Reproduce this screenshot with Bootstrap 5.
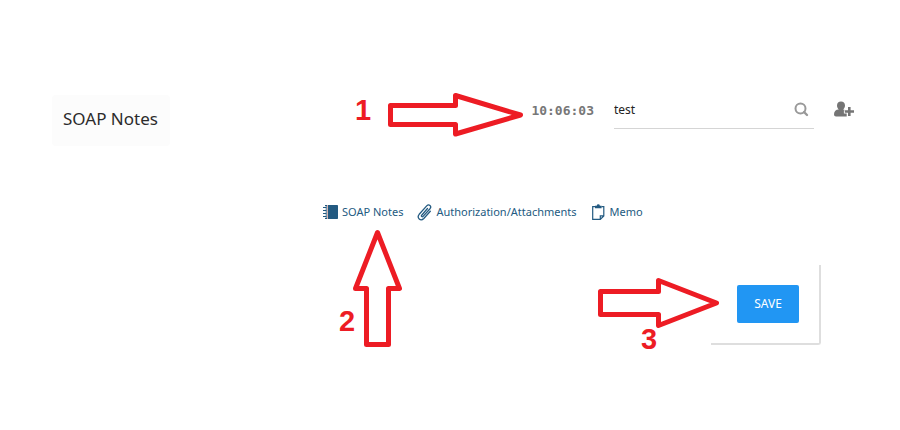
<!DOCTYPE html>
<html lang="en">
<head>
<meta charset="utf-8">
<meta name="viewport" content="width=device-width, initial-scale=1">
<title>SOAP Notes</title>
<link href="https://cdn.jsdelivr.net/npm/bootstrap@5.3.0/dist/css/bootstrap.min.css" rel="stylesheet">
<style>
body { font-family: "Noto Sans", "Open Sans", sans-serif; background: #fff; }
.page-top { padding: 95px 46px 0 52px; }
.page-title { background: #fcfcfc; color: #2b2b2b; font-size: 17px; line-height: 24px; padding: 12px 12px 15px 11px; }
.clock { font: bold 13px/20px "DejaVu Sans Mono", monospace; color: #777; margin-top: 6px; }
.patient-search { width: 200px; border-bottom: 1px solid #d5d5d5; height: 34px; }
.patient-search input { font-size: 12px; line-height: 18px; color: #222; padding: 6px 0 10px; box-shadow: none; }
.patient-search button { color: #999; padding: 0 5px 4px; line-height: 1; }
.add-user { color: #757575; line-height: 1; margin-top: 6px; }
.note-tabs { gap: 14px; padding: 56px 0 0 323px; }
.note-tabs a { color: #235a81; font-size: 11px; line-height: 20px; gap: 4px; }
.actions { padding: 43px 79px 0 0; }
.save-panel { border-right: 2px solid #dedede; border-bottom: 2px solid #dedede; border-bottom-right-radius: 3px; padding: 20px 20px 20px 26px; }
.btn-save { --bs-btn-color: #fff; --bs-btn-bg: #2196f3; --bs-btn-hover-color: #fff; --bs-btn-hover-bg: #1b87dc; font-size: 12px; line-height: 18px; padding: 10px 0; width: 62px; border: 0; border-radius: 2px; }
.callouts { pointer-events: none; }
.callouts polygon { fill: none; stroke: #ed1c24; stroke-width: 5; stroke-linejoin: round; }
.callouts text { fill: #ed1c24; font: bold 29px "Liberation Sans", Arial, sans-serif; }
</style>
</head>
<body class="position-relative min-vh-100">
<header class="page-top d-flex align-items-start">
  <h1 class="page-title m-0 fw-normal rounded-1">SOAP Notes</h1>
  <time class="clock ms-auto me-1">10:06:03</time>
  <form class="patient-search d-flex align-items-center ms-3 me-3">
    <input class="form-control border-0 rounded-0 bg-transparent" type="text" value="test" aria-label="Search patient">
    <button class="btn border-0" type="button" aria-label="Search">
      <svg class="d-block" width="15" height="15" viewBox="0 0 15 15" fill="none" stroke="currentColor" stroke-width="2"><circle cx="6.5" cy="6.5" r="5"/><path d="M10 10l3 3" stroke-width="2.4" stroke-linecap="round"/></svg>
    </button>
  </form>
  <button class="add-user btn border-0 p-0 ms-1" type="button" aria-label="Add patient">
    <svg class="d-block" width="20" height="16" viewBox="0 0 20 16" fill="currentColor"><path d="M7 .5C4.600.500 3 2 3 4.500c0 1.800.8 3.200 1.800 3.900C2.200 8.300 0 9.800 0 13.300 0 14.900.9 15.500 2 15.500h10.700V12.600H9.900V9.200h1.200c-.6-.5-1.300-.7-2-.8C10.200 7.700 11 6.300 11 4.500 11 2 9.400.5 7 .5z"/><path d="M14 6h2.600v3.200H20v2.600h-3.400V15H14v-3.200h-3.200V9.200H14z"/></svg>
  </button>
</header>
<nav class="note-tabs d-flex" aria-label="Note sections">
  <a class="d-flex align-items-center text-decoration-none" href="#notes">
    <svg width="15" height="16" viewBox="0 0 15 16"><path fill="#235a81" d="M2 1h12.300q.7 0 .7.700v12.600q0 .7-.7.700H2z"/><path d="M4.500 1v14" stroke="#d8b5b0"/><path d="M0 3.500h3.500M0 6.500h3.500M0 9.500h3.500M0 12.500h3.500" stroke="#fff" stroke-width="2.400"/><path d="M0 3.500h3.500M0 6.500h3.500M0 9.500h3.500M0 12.500h3.500" stroke="#235a81" stroke-width="1.200"/></svg>
    <span>SOAP Notes</span>
  </a>
  <a class="d-flex align-items-center text-decoration-none" href="#attachments">
    <svg width="15" height="17" viewBox="0 0 15 17" fill="none" stroke="#235a81" stroke-width="1.300" stroke-linecap="round" stroke-linejoin="round"><path d="M10.500 4.500L4.700 11.200c-.8 1 .5 2.200 1.400 1.200l6.900-7.700c2-2.500-1-5.200-3.300-2.800L2.200 10.300c-2.800 3.400 1.300 7.500 4.600 4.200l6.500-7.200"/></svg>
    <span>Authorization/Attachments</span>
  </a>
  <a class="d-flex align-items-center text-decoration-none" href="#memo">
    <svg width="15" height="17" viewBox="0 0 15 17" fill="none" stroke="#235a81" stroke-width="1.200"><path d="M4 2.600H1.700v12.800h7.600l3.500-3.500V2.600h-2.300M9.300 15.400v-3.500h3.500"/><path fill="#235a81" stroke="none" d="M4 1.700h1.700Q5.900.3 7.300.3t1.600 1.400h1.700v2.600H4z"/></svg>
    <span>Memo</span>
  </a>
</nav>
<section class="actions d-flex justify-content-end">
  <div class="save-panel"><button class="btn btn-save" type="button">SAVE</button></div>
</section>
<svg class="callouts position-absolute top-0 start-0" width="900" height="430" viewBox="0 0 900 430">
  <polygon points="390.500,105.500 455.500,105.500 455.500,95.500 520.500,115 455.500,134 455.500,124.500 390.500,124.500"/>
  <polygon points="366.500,288.500 355.500,288.500 377.500,232.500 399.500,288.500 388.500,288.500 388.500,344.500 366.500,344.500"/>
  <polygon points="600.500,291.500 658.500,291.500 658.500,280.500 716.500,303 658.500,325.500 658.500,314.500 600.500,314.500"/>
  <text x="355" y="120">1</text>
  <text x="339" y="331">2</text>
  <text x="641" y="349">3</text>
</svg>
<script src="https://cdn.jsdelivr.net/npm/bootstrap@5.3.0/dist/js/bootstrap.bundle.min.js"></script>
</body>
</html>
